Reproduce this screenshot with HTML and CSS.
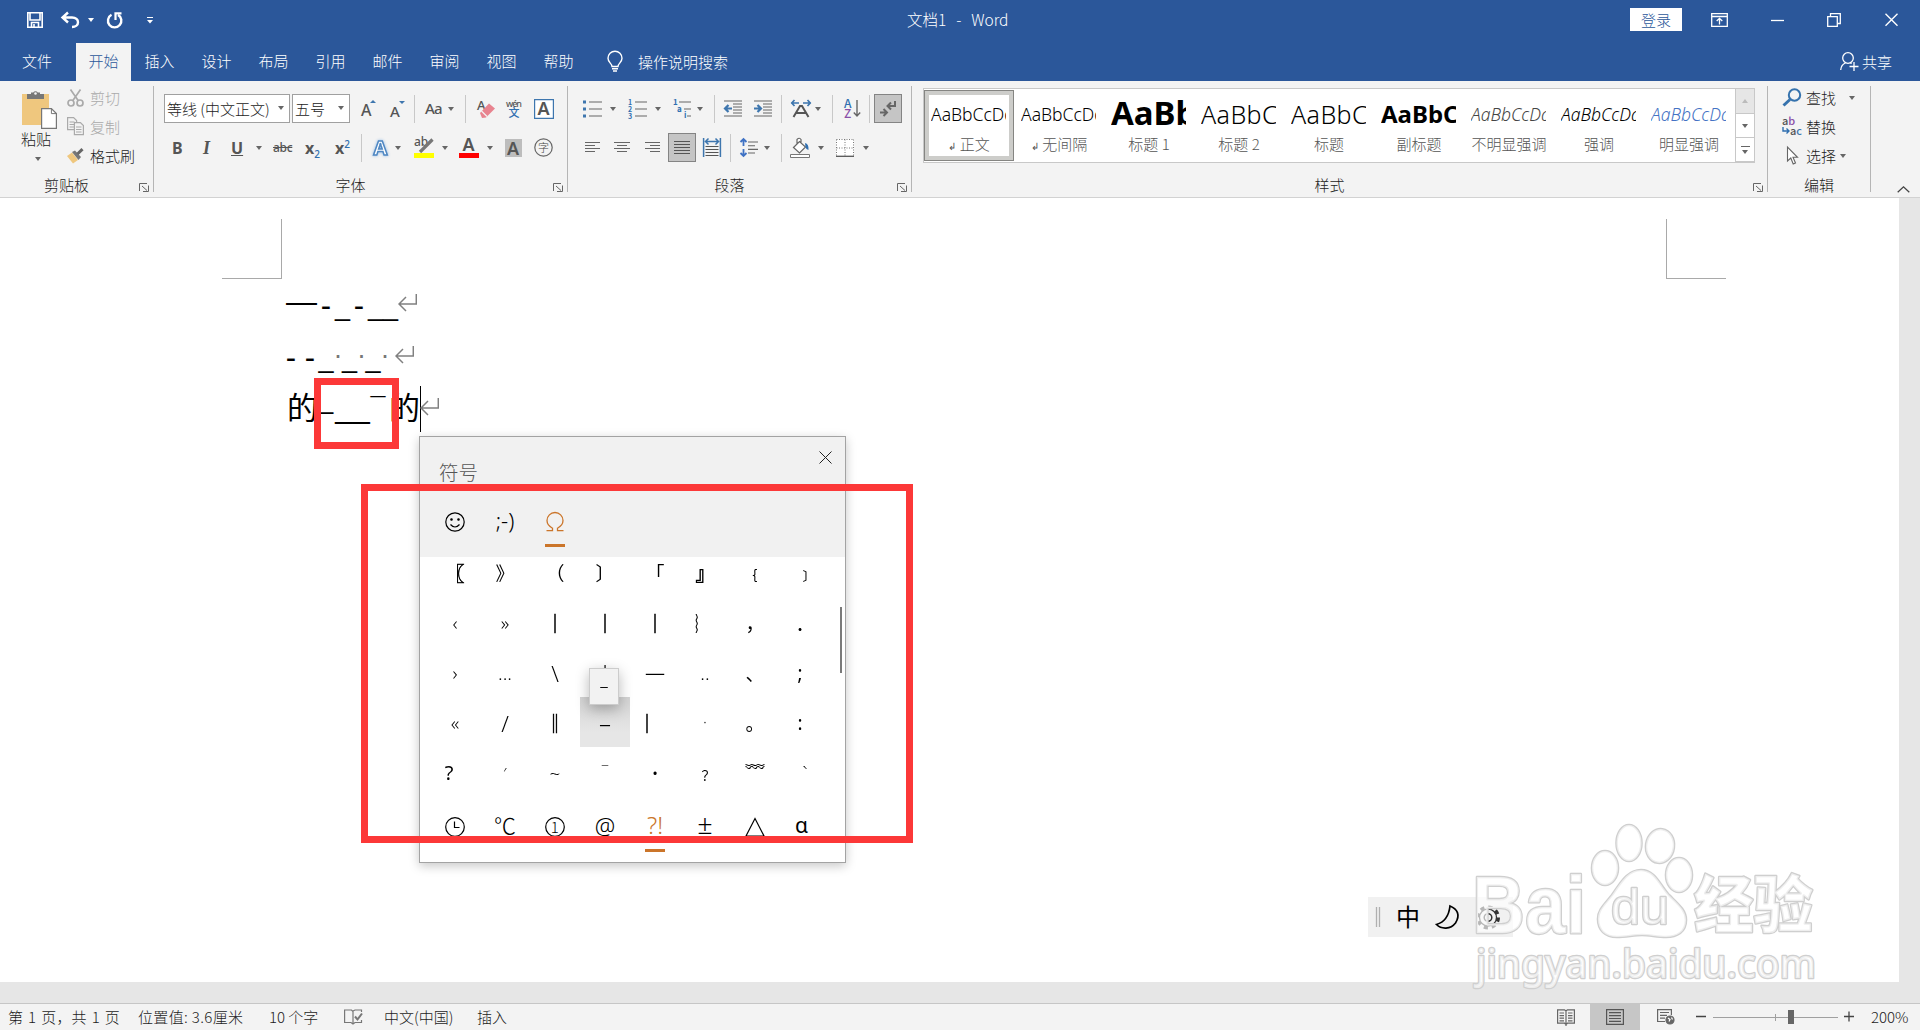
FILE: index.html
```html
<!DOCTYPE html>
<html lang="zh-CN">
<head>
<meta charset="utf-8">
<title>文档1 - Word</title>
<link rel="stylesheet" href="styles.css">
</head>
<body>
<svg class="defs" width="0" height="0">
  <symbol id="launch" viewBox="0 0 10 9"><path d="M.5 8V.5H8M3 3l5 4.500M9.500 2.500v6H4" fill="none" stroke="#666"/></symbol>
  <symbol id="ret" viewBox="0 0 19 18"><path d="M18.300 0v10H1M8 3L1 10l7 7"/></symbol>
</svg>
<div class="app">
  <header class="titlebar">
    <div class="quick">
      <svg width="16" height="16" viewBox="0 0 16 16"><path d="M.8.8h14.4v14.4H.8zM3 1v7h10V1M4.500 15v-4.500h7V15M7 12v3" fill="none" stroke="#fff" stroke-width="1.600"/></svg>
      <svg width="18" height="16" viewBox="0 0 18 16"><path d="M7 .500L1.500 5.500 7 10.500M2 5.500h9c4 0 6 2.300 6 4.700 0 2.800-2.300 4.800-6 4.800" fill="none" stroke="#fff" stroke-width="2.400"/></svg>
      <i class="tri white"></i>
      <svg width="17" height="17" viewBox="0 0 17 17"><path d="M5.500 2.800A6.700 6.700 0 1 0 12 2.900" fill="none" stroke="#fff" stroke-width="2.400"/><path d="M9.500 8V1.300h6" fill="none" stroke="#fff" stroke-width="2.200"/></svg>
      <svg width="6" height="7" viewBox="0 0 6 7"><path d="M0 .5h6" stroke="#fff"/><path d="M0 3h6L3 6.500z" fill="#fff"/></svg>
    </div>
    <div class="doctitle">文档1&nbsp; - &nbsp;Word</div>
    <div class="winbtns">
      <span class="login">登录</span>
      <svg width="17" height="14" viewBox="0 0 17 14" fill="none" stroke="#fff" stroke-width="1.300"><path d="M.7.7h15.600v12.600H.7zM.7 3.500h15.600M8.500 11.500V5.500M5.700 8l2.800-2.700L11.300 8"/></svg>
      <svg width="13" height="14" viewBox="0 0 13 14"><path d="M0 7.500h13" stroke="#fff" stroke-width="1.300"/></svg>
      <svg width="14" height="14" viewBox="0 0 14 14" fill="none" stroke="#fff" stroke-width="1.300"><path d="M.7 3.700h9.600v9.600H.7zM3.500 3.500V.7h9.800v9.800h-3"/></svg>
      <svg width="13" height="14" viewBox="0 0 13 14"><path d="M.5.8l12 12M12.500.8l-12 12" stroke="#fff" stroke-width="1.400"/></svg>
    </div>
  </header>
  <nav class="tabs">
    <span class="tab file">文件</span><span class="tab active">开始</span><span class="tab">插入</span><span class="tab">设计</span><span class="tab">布局</span><span class="tab">引用</span><span class="tab">邮件</span><span class="tab">审阅</span><span class="tab">视图</span><span class="tab">帮助</span>
    <span class="tell"><svg width="16" height="21" viewBox="0 0 16 21" fill="none" stroke="#fff" stroke-width="1.400"><path d="M5 15.500c0-3-4-4-4-8.300a7 7 0 0 1 14 0c0 4.300-4 5.300-4 8.300zM5 17.800h6M6 20h4"/></svg>操作说明搜索</span>
    <span class="share"><svg width="19" height="19" viewBox="0 0 19 19" fill="none" stroke="#fff" stroke-width="1.300"><circle cx="8" cy="6" r="5.300"/><path d="M.7 18c.3-4 2.300-6 4.700-7M9.500 14.500h9M14 10v9M10.500 10.800l1 1"/></svg>共享</span>
  </nav>

  <section class="ribbon">
    <div class="group clip">
      <div class="cliprow">
        <div class="paste">
          <svg width="35" height="39" viewBox="0 0 35 39"><path d="M0 4h27v31H0z" fill="#efc77e"/><path d="M5 4h4V2.500h2.200a2.800 2.800 0 0 1 4.600 0H18V4h4v5H5z" fill="#777"/><circle cx="13.500" cy="3.500" r="1.300" fill="#f3f3f3"/><path d="M19.600 18.600h9.800l5 5v14.800H19.600z" fill="#fff" stroke="#777" stroke-width="1.200"/><path d="M29.400 18.600v5h5" fill="none" stroke="#777"/></svg>
          <span>粘贴</span><i class="tri"></i>
        </div>
        <div class="cliplist">
          <div class="dis"><svg width="17" height="18" viewBox="0 0 17 18" fill="none" stroke="#aaa" stroke-width="1.700"><circle cx="4" cy="14" r="3"/><circle cx="13" cy="14" r="3"/><path d="M3.500.500L11.500 12M13.500.500L5.500 12"/></svg>剪切</div>
          <div class="dis"><svg width="17" height="19" viewBox="0 0 17 19" fill="#f3f3f3" stroke="#aaa" stroke-width="1.200"><path d="M.6.6h6l3 3v9h-9zM2.500 5h5M2.500 7.500h5M2.500 10h5"/><path d="M7.400 5.600h6l3 3v9h-9zM9 10h5.500M9 12.500h5.500M9 15h5.500"/></svg>复制</div>
          <div><svg width="17" height="16" viewBox="0 0 17 16"><path d="M0 8l5-3.500L11 12l-5 3.500z" fill="#efc77e"/><path d="M5 4l3-1.500 6 6.500-2.500 3z" fill="#777"/><path d="M10.500 6l5-4.800" stroke="#666" stroke-width="3"/></svg>格式刷</div>
        </div>
      </div>
      <div class="label"><span>剪贴板</span><svg class="launch"><use href="#launch"/></svg></div>
    </div>

    <div class="group font">
      <div class="row fr1">
        <span class="combo">等线 (中文正文)<i class="tri"></i></span>
        <span class="combo c2">五号<i class="tri"></i></span>
        <svg width="16" height="18" viewBox="0 0 16 18"><text x="0" y="16" font-size="16" class="ic">A</text><path d="M9 3h6l-3-3z" fill="#3e76ae"/></svg>
        <svg width="16" height="18" viewBox="0 0 16 18"><text x="0" y="16.500" font-size="15" class="ic">A</text><path d="M9 1h6l-3 3z" fill="#3e76ae"/></svg>
        <i class="sep"></i>
        <svg width="20" height="18" viewBox="0 0 20 18"><text x="0" y="14" font-size="15" class="ic" textLength="17.500">Aa</text></svg>
        <i class="tri"></i><i class="sep"></i>
        <svg width="18" height="20" viewBox="0 0 18 20"><text x="0" y="11" font-size="13" class="ic">A</text><path d="M3 14l9-9.500 6 5L9 18.500 5 19z" fill="#e8838f"/><path d="M4.500 12l5.500 5.500" stroke="#f3f3f3" stroke-width="1.200"/></svg>
        <svg width="17" height="20" viewBox="0 0 17 20"><text x="0" y="7.500" font-size="9" class="ic" textLength="16">wén</text><text x="2.500" y="18" font-size="11" fill="#2f6fb0" font-weight="500">文</text></svg>
        <svg width="20" height="20" viewBox="0 0 20 20"><path d="M.6.6h18.800v18.800H.6z" fill="#fff" stroke="#3e76ae" stroke-width="1.200"/><text x="3.500" y="16" font-size="18" class="ic b">A</text></svg>
      </div>
      <div class="row fr2">
        <b class="ch">B</b><em class="ch">I</em><u class="ch">U</u><i class="tri"></i>
        <s class="ch small">abc</s>
        <span class="ch">x<sub>2</sub></span><span class="ch">x<sup>2</sup></span><i class="sep"></i>
        <svg width="17" height="20" viewBox="0 0 17 20"><g font-size="20" font-weight="700" fill="#fff" class="glow"><text x="1.500" y="17" stroke="#4f87c2" stroke-width="1.500">A</text></g></svg>
        <i class="tri"></i>
        <svg width="20" height="20" viewBox="0 0 20 20"><text x="0" y="8" font-size="12" class="ic">ab</text><path d="M18.500 1.500L10 10l-4 4" stroke="#777" stroke-width="3.200"/><path d="M0 15h20v5H0z" fill="#ff0"/></svg>
        <i class="tri"></i>
        <svg width="20" height="20" viewBox="0 0 20 20"><text x="3.500" y="13" font-size="18" class="ic b">A</text><path d="M0 15h20v5H0z" fill="red"/></svg>
        <i class="tri"></i>
        <svg width="17" height="18" viewBox="0 0 17 18"><path d="M0 0h17v18H0z" fill="#bdbdbd"/><text x="2" y="15.500" font-size="18" class="ic b">A</text></svg>
        <svg width="19" height="19" viewBox="0 0 19 19"><circle cx="9.500" cy="9.500" r="8.700" fill="none" stroke="#666" stroke-width="1.200"/><text x="4" y="13.500" font-size="11" fill="#444">字</text></svg>
      </div>
      <div class="label"><span>字体</span><svg class="launch"><use href="#launch"/></svg></div>
    </div>

    <div class="group para">
      <div class="row pr1">
        <svg width="19" height="18" viewBox="0 0 19 18"><path d="M6 2h13M6 9h13M6 16h13" stroke="#666" stroke-width="1.200"/><path d="M0 .500h3v3H0zM0 7.500h3v3H0zM0 14.500h3v3H0z" fill="#3e76ae"/></svg>
        <i class="tri"></i>
        <svg width="19" height="18" viewBox="0 0 19 18"><path d="M7 2h12M7 9h12M7 16h12" stroke="#666" stroke-width="1.200"/><g font-size="7" fill="#2f6fb0" font-weight="700"><text x="0" y="5">1</text><text x="0" y="12">2</text><text x="0" y="18.500">3</text></g></svg>
        <i class="tri"></i>
        <svg width="19" height="18" viewBox="0 0 19 18"><path d="M6 2h12M11 9h7M14 16h4" stroke="#666" stroke-width="1.200"/><g font-size="8" fill="#2f6fb0" font-weight="700"><text x="0" y="5">1</text><text x="4" y="12">a</text><text x="11" y="18">i</text></g></svg>
        <i class="tri"></i><i class="sep"></i>
        <svg width="18" height="17" viewBox="0 0 18 17"><path d="M0 1h18M9 4h9M9 7h9M9 10h9M9 13h9M0 16h18" stroke="#666" stroke-width="1.100"/><path d="M8 8.500H1M4.500 5L1 8.500 4.500 12" fill="none" stroke="#3e76ae" stroke-width="2.200"/></svg>
        <svg width="18" height="17" viewBox="0 0 18 17"><path d="M0 1h18M9 4h9M9 7h9M9 10h9M9 13h9M0 16h18" stroke="#666" stroke-width="1.100"/><path d="M0 8.500h7M3.500 5L7 8.500 3.500 12" fill="none" stroke="#3e76ae" stroke-width="2.200"/></svg>
        <i class="sep"></i>
        <svg width="20" height="18" viewBox="0 0 20 18"><path d="M2.500 17L9 6h2l6.500 11M5.500 13h9" fill="none" stroke="#555" stroke-width="2"/><path d="M0 3h8M12 3h8M3.500 0L.8 3l2.700 3M16.500 0l2.700 3-2.700 3" fill="none" stroke="#3e76ae" stroke-width="1.700"/></svg>
        <i class="tri"></i><i class="sep"></i>
        <svg width="17" height="19" viewBox="0 0 17 19"><text x="0" y="9" font-size="12" font-weight="500" fill="#2f6fb0">A</text><text x="0" y="18.500" font-size="12" font-weight="500" fill="#8a4fa8">Z</text><path d="M13 1v16M9.800 13.500L13 17l3.200-3.500" fill="none" stroke="#666" stroke-width="1.400"/></svg>
        <i class="sep"></i>
        <span class="on"><svg width="18" height="16" viewBox="0 0 18 16" fill="none" stroke="#666" stroke-width="2"><path d="M16 0v5H9M12 1.500L8.500 5 12 8.500M1 11.500h7M4.500 8L8 11.500 4.500 15"/></svg></span>
      </div>
      <div class="row pr2">
        <svg width="15" height="11" viewBox="0 0 15 11"><path d="M0 .500h15M0 3.500h10M0 6.500h15M0 9.500h10" stroke="#666"/></svg>
        <svg width="16" height="11" viewBox="0 0 16 11"><path d="M0 .500h16M3 3.500h10M0 6.500h16M3 9.500h10" stroke="#666"/></svg>
        <svg width="15" height="11" viewBox="0 0 15 11"><path d="M0 .500h15M5 3.500h10M0 6.500h15M5 9.500h10" stroke="#666"/></svg>
        <span class="on"><svg width="16" height="13" viewBox="0 0 16 13"><path d="M0 .500h16M0 3.500h16M0 6.500h16M0 9.500h16M0 12.500h16" stroke="#555"/></svg></span>
        <svg width="18" height="19" viewBox="0 0 18 19"><path d="M.6 0v19M17.400 0v19M2.500 3.500h13M5.500.500l-3 3 3 3M12.500.500l3 3-3 3" fill="none" stroke="#3e76ae" stroke-width="1.500"/><path d="M2.500 8.500h13M2.500 11.500h13M2.500 14.500h13M2.500 17.500h13" stroke="#555" stroke-width="1.200"/></svg>
        <i class="sep"></i>
        <svg width="18" height="19" viewBox="0 0 18 19"><path d="M3.500 1v7M.500 4l3-3 3 3M3.500 18v-7M.500 15l3 3 3-3" fill="none" stroke="#3f72c4" stroke-width="1.800"/><path d="M8 4h10M8 7.700h7M8 11.400h10M8 15h7" stroke="#666" stroke-width="1.100"/></svg>
        <i class="tri"></i><i class="sep"></i>
        <svg width="20" height="20" viewBox="0 0 20 20"><path d="M3.500 9.500l6-6 6 5.500-6 6zM7 6V1.500q2.500-2.500 4 0V6" fill="#fff" stroke="#666" stroke-width="1.200"/><path d="M15 5q4 1 3.500 7-2.500-.5-3-3z" fill="#2f6fb0"/><path d="M.5 16.500h19v3H.5z" fill="#fff" stroke="#777"/></svg>
        <i class="tri"></i>
        <svg width="18" height="18" viewBox="0 0 18 18"><path d="M0 0h18v18H0z" fill="#fff"/><path d="M.5.500h17M.5.500v17M17.500.500v17M9 .500v17M.5 9h17" stroke="#777" stroke-dasharray="1 1.500" fill="none"/><path d="M0 17.300h18" stroke="#555" stroke-width="1.300"/></svg>
        <i class="tri"></i>
      </div>
      <div class="label"><span>段落</span><svg class="launch"><use href="#launch"/></svg></div>
    </div>

    <div class="group styles">
      <div class="gallery">
        <div class="st sel"><p>AaBbCcDd</p><span><small>↲</small> 正文</span></div>
        <div class="st"><p>AaBbCcDd</p><span><small>↲</small> 无间隔</span></div>
        <div class="st h1"><p>AaBb</p><span>标题 1</span></div>
        <div class="st h2"><p>AaBbC</p><span>标题 2</span></div>
        <div class="st h2"><p>AaBbC</p><span>标题</span></div>
        <div class="st h2 bold"><p>AaBbC</p><span>副标题</span></div>
        <div class="st it gray"><p>AaBbCcDd</p><span>不明显强调</span></div>
        <div class="st it"><p>AaBbCcDd</p><span>强调</span></div>
        <div class="st it blue"><p>AaBbCcDd</p><span>明显强调</span></div>
        <div class="scroller"><span class="off"><i class="tri up"></i></span><span><i class="tri"></i></span><span><i class="bar"></i><i class="tri"></i></span></div>
      </div>
      <div class="label"><span>样式</span><svg class="launch"><use href="#launch"/></svg></div>
    </div>

    <div class="group edit">
      <div class="er"><svg width="20" height="19" viewBox="0 0 20 19" fill="none" stroke="#3572ad"><circle cx="12.500" cy="7" r="5.700" stroke-width="2"/><path d="M8 11.500l-6.500 6" stroke-width="3"/></svg><span>查找</span><i class="tri far"></i></div>
      <div class="er"><svg width="20" height="19" viewBox="0 0 20 19"><text x="0" y="8" font-size="11" font-weight="500" fill="#555">a<tspan fill="#8a4fa8">b</tspan></text><text x="8" y="18" font-size="11" font-weight="500" fill="#555">a<tspan fill="#3e76ae">c</tspan></text><path d="M1 10v4h6M4.500 11.500L7 14l-2.500 2.500" fill="none" stroke="#2f6fb0" stroke-width="1.400"/></svg><span>替换</span></div>
      <div class="er"><svg width="20" height="19" viewBox="0 0 20 19"><path d="M5.500 1v14l3.300-3 2.400 6 2.300-1-2.500-5.700h4.500z" fill="#fff" stroke="#666" stroke-width="1.100"/></svg><span>选择</span><i class="tri near"></i></div>
      <div class="label"><span>编辑</span></div>
    </div>
    <svg class="collapse" width="13" height="7" viewBox="0 0 13 7"><path d="M.7 6.300l5.800-5.500 5.800 5.500" fill="none" stroke="#444" stroke-width="1.300"/></svg>
  </section>

  <main class="canvas">
    <div class="page">
      <i class="crop left"></i><i class="crop right"></i>
      <div class="line"><span class="em">—</span><span class="hy">-</span><span class="us">_</span><span class="hy">-</span><span class="us">_</span><span class="us">_</span><svg class="ret"><use href="#ret"/></svg></div>
      <div class="line l2"><span class="hy">-</span><span class="hy">-</span><span class="us">_</span><span class="dot">·</span><span class="us">_</span><span class="dot">·</span><span class="us">_</span><span class="dot">·</span><svg class="ret"><use href="#ret"/></svg></div>
      <div class="line l3"><span class="de">的</span><span class="en">–</span><span class="us2">__</span><span class="ov">¯</span><span class="de">的</span><i class="caret"></i><svg class="ret"><use href="#ret"/></svg></div>
    </div>
  </main>

  <footer class="status">
    <span class="pg">第 1 页，共 1 页</span><span class="pos">位置值: 3.6厘米</span><span>10 个字</span>
    <svg width="19" height="16" viewBox="0 0 19 16" fill="none" stroke="#777" stroke-width="1.200"><path d="M9 2.500L7.500 1H.6v12.500H7L9 15l2-1.500h6.500V11M9 2v13M9 2l2-1h6.500v2"/><path d="M11 7.500l2.500 3 4.500-6" stroke-width="2"/></svg>
    <span>中文(中国)</span><span>插入</span>
    <div class="views">
      <span><svg width="18" height="17" viewBox="0 0 18 17" fill="none" stroke="#666" stroke-width="1.200"><path d="M9 2L7.500.8H.6v13.400h7L9 15.500l1.500-1.300h6.900V.8h-7zM9 2v15M2.500 4h4.500M2.500 6.600h4.500M2.500 9.200h4.500M2.500 11.800h4.500M11 4h4.500M11 6.600h4.500M11 9.200h4.500M11 11.800h4.500"/></svg></span>
      <span class="cur"><svg width="18" height="16" viewBox="0 0 18 16" fill="none" stroke="#555" stroke-width="1.200"><path d="M.6.6h16.800v14.800H.6zM3 3.700h12M3 6.600h12M3 9.500h12M3 12.400h12"/></svg></span>
      <span><svg width="18" height="16" viewBox="0 0 18 16" fill="none" stroke="#666" stroke-width="1.200"><path d="M8 12.500H.6V.6h13.800V6M3 3.500h9M3 6.300h7M3 9.100h5"/><circle cx="13" cy="11" r="4" fill="#666"/><path d="M11 9l2 1.500-1 2M14.500 8.500l1 2" stroke="#fff"/></svg></span>
    </div>
    <svg class="zoom" width="158" height="16" viewBox="0 0 158 16"><path d="M0 7.500h10M148 7.500h10M153 2.500v10" stroke="#444" stroke-width="1.300"/><path d="M17 8.500h125M79.500 5v7" stroke="#a0a0a0"/><path d="M92 1h6v14h-6z" fill="#666"/></svg>
    <span class="pct">200%</span>
  </footer>

  <div class="popup">
    <div class="pop-head">
      <div class="pop-title"><span>符号</span><svg width="13" height="13" viewBox="0 0 13 13"><path d="M.5.500l12 12M12.500.500l-12 12" stroke="#222"/></svg></div>
      <div class="pop-tabs">
        <span><svg width="20" height="20" viewBox="0 0 20 20" fill="none" stroke="#000" stroke-width="1.200"><circle cx="10" cy="10" r="9.200"/><path d="M5.500 12.500q4.500 5 9 0"/><circle cx="6.500" cy="7.500" r=".7" fill="#000"/><circle cx="13.500" cy="7.500" r=".7" fill="#000"/></svg></span>
        <span class="kao">;-)</span>
        <span class="hot"><svg width="20" height="20" viewBox="0 0 20 20" fill="none" stroke="#cb752a" stroke-width="1.300"><path d="M1.500 18.700h6v-2.500C3.500 14 2 11.500 2 8.500a8 8 0 0 1 16 0c0 3-1.500 5.500-5.500 7.700v2.500h6"/></svg></span>
      </div>
    </div>
    <div class="sym">
      <span class="hv">〖</span><span>》</span><span>（</span><span>〕</span><span>「</span><span class="hv">』</span><span>﹛</span><span>﹞</span>
      <span class="la">‹</span><span class="la">»</span><span class="hv">│</span><span class="hv">│</span><span class="hv">｜</span><span class="wv">︴</span><span>，</span><span>．</span>
      <span class="la">›</span><span class="la">...</span><span class="la tall">\</span><span>¦</span><span class="bar-em">—</span><span class="la">..</span><span>、</span><span class="la sh">;</span>
      <span class="la">«</span><span class="la tall">/</span><span class="hv">‖</span><span class="hover la">–</span><span class="lf hv">│</span><span class="la tiny">·</span><span>。</span><span class="la sh">:</span>
      <span class="la sh q">?</span><span class="la sm">′</span><span class="la">~</span><span class="la sm ma">¯</span><span class="la">•</span><span class="sm">﹖</span><span>﹌</span><span class="la">`</span>
    </div>
    <div class="cats">
      <span><svg width="20" height="20" viewBox="0 0 20 20" fill="none" stroke="#000" stroke-width="1.200"><circle cx="10" cy="10" r="9.300"/><path d="M9.500 4.500v6h5"/></svg></span>
      <span class="deg">℃</span>
      <span><svg width="20" height="20" viewBox="0 0 20 20"><circle cx="10" cy="10" r="9.300" fill="none" stroke="#000" stroke-width="1.200"/><text x="5.800" y="15.500" font-size="15">1</text></svg></span>
      <span class="la at">@</span><span class="hot la ex">?!</span><span class="la pm">±</span>
      <span><svg width="20" height="20" viewBox="0 0 20 20"><path d="M1 19L10 1.500 19 19z" fill="none" stroke="#000" stroke-width="1.200"/></svg></span>
      <span class="la al">α</span>
    </div>
    <i class="thumb"></i>
    <div class="tip">–</div>
  </div>

  <div class="ime">
    <svg width="145" height="40" viewBox="0 0 145 40"><path d="M8.500 10v20M11.500 10v20" stroke="#b0b0b0" stroke-width="1.300"/><path d="M82 9c-1 9-5 16-13.500 18.500 5 5 14 5 19-1.500 5-8 2-14-5.500-17z" fill="none" stroke="#000" stroke-width="1.700"/><circle cx="120" cy="20.500" r="10" fill="none" stroke="#333" stroke-width="4" stroke-dasharray="4 3.850"/><circle cx="120" cy="20.500" r="8.500" fill="#f1f1f1" stroke="#333" stroke-width="1.300"/><circle cx="120" cy="20.500" r="3.800" fill="none" stroke="#333" stroke-width="1.500"/><text x="28" y="29" font-size="24" font-weight="400">中</text></svg>
  </div>

  <svg class="mark" width="350" height="170" viewBox="0 0 350 170">
    <g fill="#fff" stroke="#cfcfcf" stroke-width="2.600" fill-opacity=".65" stroke-linejoin="round" paint-order="stroke">
      <ellipse cx="135" cy="48" rx="13" ry="17"/><ellipse cx="159" cy="23" rx="12.500" ry="18"/><ellipse cx="190" cy="26" rx="14" ry="17" transform="rotate(8 190 26)"/><ellipse cx="209" cy="55" rx="13" ry="17"/>
      <path d="M171 50c14 0 19 15 28 25 9 9 17 15 17 25 0 12-9 17-20 17-9 0-16-2-24-2s-16 2-25 2c-12 0-19-7-19-18 0-9 6-14 14-24 8-11 15-25 29-25z"/>
      <g class="hel"><text x="2" y="113" font-size="82" font-weight="700" textLength="114" lengthAdjust="spacingAndGlyphs">Bai</text>
      <text x="141" y="104" font-size="50" font-weight="400" textLength="58" lengthAdjust="spacingAndGlyphs">du</text></g>
      <g class="wm"><text class="cjk" x="224" y="108" font-size="62" font-weight="900" textLength="119" lengthAdjust="spacingAndGlyphs">经验</text>
      <text x="6" y="158" font-size="40" font-weight="500" textLength="340" lengthAdjust="spacingAndGlyphs">jingyan.baidu.com</text></g>
    </g>
  </svg>
  <i class="redbox small"></i><i class="redbox big"></i>
</div>
</body>
</html>
```
FILE: styles.css
```css
* { box-sizing: border-box; }
body { margin: 0; overflow: hidden; }
i { font-style: normal; }
svg { display: block; flex: none; overflow: visible; }
.defs { position: absolute; }
.app {
  position: relative; width: 1920px; height: 1030px;
  display: flex; flex-direction: column;
  font: 300 15px/20px "Noto Sans CJK SC", sans-serif; color: #1c1c1c; background: #fff;
  white-space: nowrap;
}
.ic { fill: #555; font-weight: 500; font-family: "Noto Sans", sans-serif; }
.ic.b { font-weight: 600; }
.glow { filter: drop-shadow(0 0 1.5px #8fb8e4); font-family: "Noto Sans", sans-serif; }

/* title bar and tabs */
.titlebar { height: 43px; background: #2b579a; color: #fff; display: grid; grid-template-columns: 907px 723px 1fr; }
.quick { display: grid; grid-template-columns: 34px 27px 18px 41px 6px; padding-left: 27px; height: 40px; align-items: center; }
.doctitle { line-height: 38px; font-size: 15.500px; word-spacing: 1.5px; }
.winbtns { display: grid; grid-template-columns: 81px 60px 56px 58px 13px; align-items: center; height: 39px; }
.login { width: 52px; height: 23px; background: #fff; color: #2b579a; text-align: center; line-height: 23px; }
.tabs { height: 38px; background: #2b579a; color: #fff; display: flex; line-height: 35px; }
.tab { width: 57px; text-align: center; }
.tab.file { width: 74px; }
.tab.active { background: #f3f3f3; color: #2b579a; width: 55px; margin-left: 2px; }
.tell { display: flex; gap: 15px; margin-left: 20px; height: 36px; align-items: center; }
.share { display: flex; gap: 3px; margin-left: auto; margin-right: 28px; height: 37px; align-items: center; }

/* ribbon */
.ribbon { height: 117px; background: #f3f3f3; border-bottom: 1px solid #d2d2d2; display: flex; padding-top: 5px; position: relative; }
.group { height: 106px; border-right: 1px solid #b5b5b5; padding-top: 8px; display: flex; flex-direction: column; }
.clip { width: 154px; padding-top: 0; }
.font { width: 414px; }
.para { width: 344px; }
.styles { width: 856px; padding-top: 2px; }
.edit { width: 103px; padding-top: 0; }
.label { margin-top: auto; height: 17px; line-height: 20px; text-align: center; position: relative; padding-right: 20px; }
.label > span { display: block; }
.edit .label { padding-right: 0; }
.launch { position: absolute; right: 4px; top: 8px; width: 10px; height: 9px; }
.tri { display: block; width: 0; height: 0; border: 3px solid transparent; border-top: 4px solid #666; border-bottom: 0; }
.tri.white { border-top-color: #fff; }
.tri.up { border-top: 0; border-bottom: 4px solid #bbb; }
.sep { display: block; width: 1px; height: 28px; background: #c8c8c8; }
.cliprow { display: flex; height: 86px; }
.paste { width: 67px; padding: 4px 0 0 22px; }
.paste span { display: block; margin: 0 0 8px -1px; }
.paste .tri { margin-left: 13px; }
.cliplist { margin-top: -3px; }
.cliplist div { height: 29px; display: grid; grid-template-columns: 23px 50px; align-items: center; line-height: 29px; }
.cliplist .dis { color: #aaa; }
.row { display: grid; height: 29px; margin-bottom: 10px; align-items: center; justify-items: start; }
.fr1 { padding-left: 10px; grid-template-columns: 128px 69px 29px 24px 11px 23px 17px 12px 29px 28px 20px; }
.fr2 { padding-left: 18px; grid-template-columns: 31px 28px 25px 17px 32px 30px 26px 11px 23px 19px 28px 17px 28px 18px 29px 19px; }
.pr1 { padding-left: 15px; grid-template-columns: 27px 18px 27px 18px 24px 17px 10px 30px 27px 10px 24px 17px 12px 25px 5px 28px; }
.pr2 { padding-left: 17px; grid-template-columns: 29px 31px 23px 35px 27px 10px 24px 17px 9px 28px 18px 27px 6px; }
.combo { width: 126px; height: 29px; background: #fff; border: 1px solid #a0a0a0; line-height: 25px; padding: 0 5px 1px 2px; display: flex; justify-content: space-between; align-items: center; color: #222; }
.combo.c2 { width: 58px; }
.ch { font: 700 16px/20px "Noto Sans", sans-serif; color: #555; }
.ch.small { font-size: 12px; font-weight: 500; letter-spacing: -.3px; }
em.ch { font-family: "Liberation Serif", serif; font-weight: 700; font-size: 18px; font-style: italic; }
.ch sub, .ch sup { font-size: 10px; color: #2f6fb0; line-height: 0; font-weight: 500; }
.on { width: 28px; height: 29px; background: #c5c5c5; border: 1px solid #848484; display: flex; align-items: center; justify-content: center; }

/* style gallery */
.gallery { margin-left: 11px; width: 832px; height: 75px; background: #fff; border: 1px solid #c8c8c8; display: flex; }
.st { width: 90px; padding: 10px 7px 0; height: 73px; overflow: hidden; text-align: center; color: #555; }
.st p { margin: 0; height: 31px; width: 75px; overflow: hidden; text-align: left; font: 300 17.500px/31px "Noto Sans", sans-serif; color: #000; }
.st span { display: block; line-height: 28px; }
.st small { font-size: 10px; }
.st.sel { border: 1px solid #858582; box-shadow: inset 0 0 0 4px #cdcdca; height: 71px; margin-top: 1px; padding: 8px 6px 0; }
.h1 p { font-size: 33px; font-weight: 700; line-height: 28px; }
.h2 p { font-size: 25px; line-height: 30px; letter-spacing: .4px; }
.st.bold p { font-weight: 700; font-size: 24px; letter-spacing: 0; }
.it p { font-style: italic; }
.gray p { color: #444; }
.blue p { color: #4472c4; }
.scroller { margin-left: auto; width: 19px; border-left: 1px solid #c8c8c8; display: grid; grid-template-rows: 25px 24px 24px; }
.scroller span { display: flex; flex-direction: column; align-items: center; justify-content: center; gap: 3px; border-bottom: 1px solid #c8c8c8; }
.scroller .off { background: #e6e6e6; }
.bar { width: 9px; height: 1px; background: #666; }
.er { display: flex; height: 29px; align-items: center; padding-left: 14px; line-height: 29px; }
.er:first-child { margin-top: -3px; }
.er span { margin-left: 4px; }
.far { margin-left: 13px; }
.near { margin-left: 4px; }
.collapse { margin: 100px 0 0 26px; }

/* document */
.canvas { height: 805px; background: #e6e6e6; }
.page { width: 1899px; height: 784px; background: #fff; padding: 80px 0 0 284px; position: relative; color: #000; }
.crop { position: absolute; top: 21px; width: 60px; height: 60px; border: solid #a9a9a9; }
.crop.left { left: 222px; border-width: 0 1px 1px 0; }
.crop.right { left: 1666px; border-width: 0 0 1px 1px; }
.line { display: flex; height: 52px; font: 400 27px/52px "Liberation Sans", "Noto Sans CJK SC", sans-serif; }
.line span { text-align: center; flex: none; }
.em { width: 33px; font-size: 31px; line-height: 47px; letter-spacing: -2px; }
.hy { width: 18px; font-size: 31px; line-height: 56px; }
.us { width: 15px; line-height: 57px; }
.l2 .hy { margin-right: -.5px; }
.l2 .hy:first-child { margin-left: -2px; margin-right: 1px; }
.dot { width: 8.500px; color: #777; line-height: 50px; }
.l2 .ret { margin-left: 6px; }
.de { font-family: "Noto Sans CJK SC", sans-serif; font-size: 31px; font-weight: 400; width: 33px; line-height: 48px; letter-spacing: -4px; }
.en { width: 18px; line-height: 58px; }
.us2 { width: 35px; font-size: 31px; }
.ov { width: 16px; }
.caret { width: 1px; height: 46px; margin: 4px 0 0 1px; background: #000; }
.ret { width: 19px; height: 18px; margin-top: 16px; fill: none; stroke: #808080; stroke-width: 1.500px; }
.l3 .ret { margin-left: -1px; }

/* status bar */
.status { height: 27px; background: #f3f3f3; border-top: 1px solid #c6c6c6; display: grid; grid-template-columns: 130px 131px 75px 40px 93px 1065px 154px 175px 50px; padding-left: 8px; align-items: center; line-height: 26px; }
.pg { word-spacing: 1.500px; letter-spacing: .15px; }
.pos { letter-spacing: .35px; }
.views { display: grid; grid-template-columns: 48px 50px 52px; justify-self: start; }
.views span { height: 26px; display: flex; align-items: center; justify-content: center; }
.views .cur { background: #c6c6c6; }

/* symbol panel */
.popup { position: absolute; left: 419px; top: 436px; width: 427px; height: 427px; background: #fff; border: 1px solid #a3a3a3; box-shadow: 0 3px 10px rgba(0,0,0,.22); color: #000; }
.pop-head { background: #f1f1f1; height: 120px; }
.pop-title { display: flex; justify-content: space-between; height: 60px; padding: 14px 13px 0 19px; font-size: 19.500px; color: #555; }
.pop-title span { line-height: 42px; }
.pop-tabs { display: grid; grid-template-columns: repeat(3, 50px); padding-left: 10px; height: 50px; font: 400 18px/46px "Noto Sans", sans-serif; }
.pop-tabs span { display: flex; justify-content: center; align-items: center; height: 50px; position: relative; }
.pop-tabs .kao { font-size: 22px; font-weight: 300; padding-bottom: 4px; }
.hot { color: #cb752a; position: relative; }
.hot::after { content: ""; position: absolute; left: 15px; width: 20px; height: 3px; bottom: 0; background: #cb752a; }
.sym { display: grid; grid-template-columns: repeat(8, 50px); grid-auto-rows: 50px; padding-left: 10px; margin-top: -10px; font-size: 19px; font-weight: 400; line-height: 52px; text-align: center; will-change: transform; }
.la { font-family: "Noto Sans", sans-serif; font-weight: 300; }
.hv { -webkit-text-stroke: .6px #000; }
.sh { padding-right: 10px; font-weight: 400; }
.q { padding-right: 12px; font-size: 20px; }
.lf { padding-right: 16px; }
.wv { padding-right: 1px; }
.tall { font-size: 22px; }
.bar-em { font-size: 20px; line-height: 49px; transform: scaleX(1.15); }
.tiny { font-size: 14px; }
.sm { font-size: 15px; }
.ma { font-size: 13px; line-height: 48px; }
.hover { background: linear-gradient(#d3d3d3, #e6e6e6 70%); font-size: 24px; }
.cats { display: grid; grid-template-columns: repeat(8, 50px); padding-left: 10px; height: 58px; font-size: 20px; line-height: 54px; }
.cats span { display: flex; justify-content: center; align-items: center; height: 55px; margin-top: 2px; }
.cats .deg { font-size: 22px; padding-bottom: 5px; }
.cats .at { font-size: 23px; padding-bottom: 2px; }
.cats .ex { font-size: 24px; padding-bottom: 3px; }
.cats .pm { font-size: 27px; padding-bottom: 5px; }
.cats .al { padding: 0 7px 3px 0; font-size: 21px; font-weight: 400; }
.cats .hot::after { bottom: 2px; }
.thumb { position: absolute; left: 420px; top: 170px; width: 2px; height: 66px; background: #7a7a7a; }
.tip { position: absolute; left: 169px; top: 231px; width: 30px; height: 37px; background: #f2f2f2; border: 1px solid #ccc; box-shadow: 0 4px 14px rgba(0,0,0,.28); text-align: center; line-height: 32px; font-size: 18px; font-family: "Noto Sans", sans-serif; }

/* floating overlays */
.ime { position: absolute; left: 1368px; top: 897px; width: 145px; height: 40px; background: #f1f1f1; }
.mark { position: absolute; left: 1470px; top: 820px; }
.wm { font-family: "Noto Sans", sans-serif; }
.hel { font-family: "Liberation Sans", sans-serif; }
.cjk { font-family: "Noto Sans CJK SC", sans-serif; }
.redbox { position: absolute; border: 7px solid #fc3838; }
.redbox.small { left: 314px; top: 378px; width: 85px; height: 71px; }
.redbox.big { left: 361px; top: 484px; width: 552px; height: 359px; }
```
